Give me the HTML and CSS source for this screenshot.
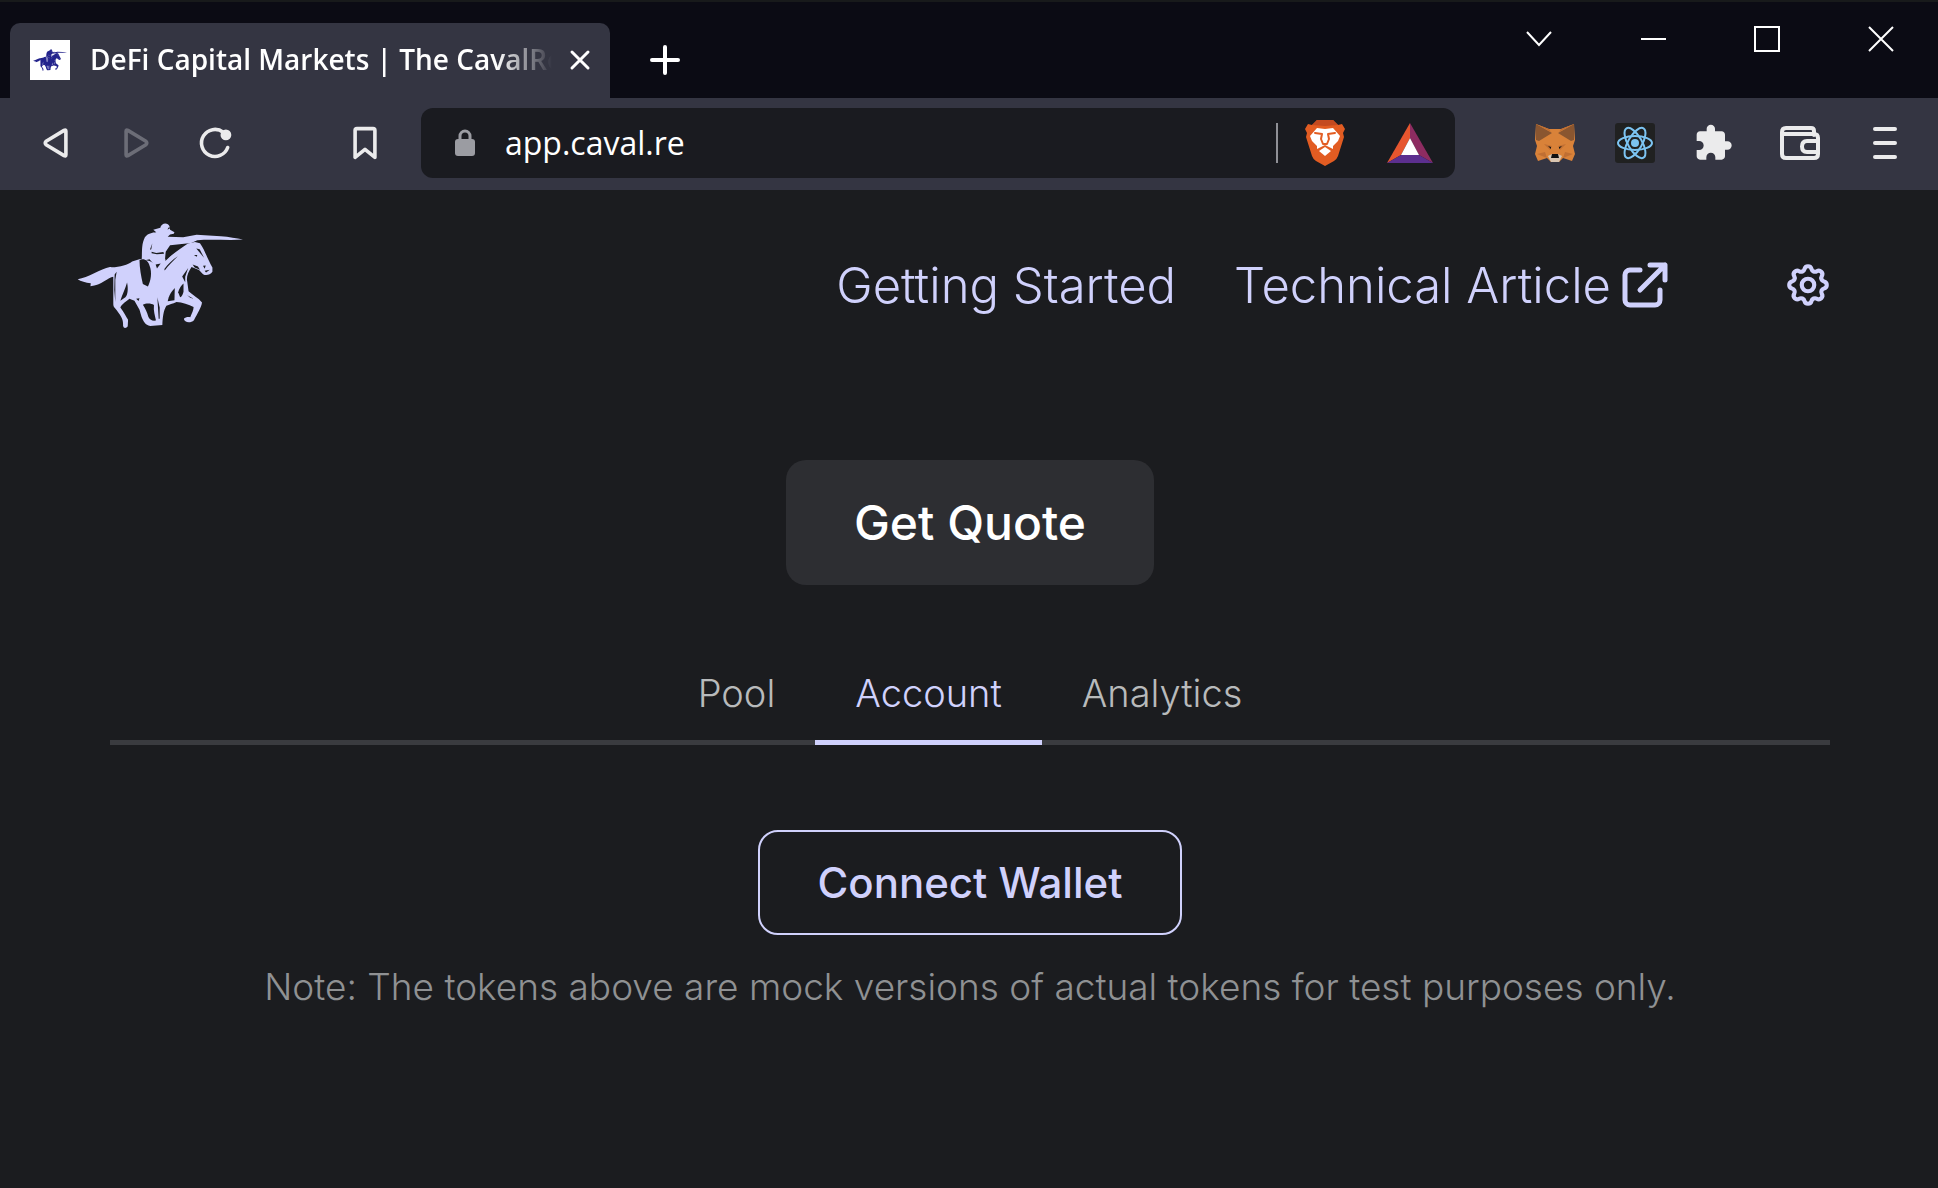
FILE: index.html
```html
<!DOCTYPE html>
<html lang="en">

<head>
    <meta charset="UTF-8">
    <meta name="viewport" content="width=device-width, initial-scale=1.0">
    <title>DeFi Capital Markets | The CavalRe</title>
    <link rel="stylesheet" href="styles.css">
</head>

<body>
    <svg width="0" height="0" class="defs" aria-hidden="true">
        <symbol id="horse" viewBox="52 68 494 318">
            <!-- horse -->
            <path d="M54 238 C85 234 122 208 150 202 C178 203 203 195 216 185 L240 178 L268 184 L290 196 L308 184 C335 166 358 148 382 132 L403 127 L418 131 C433 152 441 180 455 203 L455 216 C448 225 436 229 427 223 L415 211 L393 202 C382 218 377 233 380 245 L384 274 C397 286 413 294 424 307 C422 322 410 340 400 360 C390 370 371 367 370 356 C374 350 384 350 389 351 C394 340 399 329 399 321 C385 313 365 307 348 306 C337 311 326 314 318 317 C309 332 307 352 306 374 L270 377 C255 375 250 364 244 350 L238 329 L223 302 L208 296 C199 304 185 312 181 322 C192 337 198 348 204 359 L203 378 C198 386 188 384 189 374 C190 358 183 346 164 323 C161 320 160 316 160 310 L160 231 C145 232 125 257 92 259 L93 250 C78 248 63 244 54 238 Z"/>
            <!-- rider -->
            <path d="M244 184 C247 160 242 137 254 113 C263 101 276 99 288 98 L279 91 L300 85 C302 71 322 66 328 82 L329 91 L342 98 L340 103 L329 105 L322 112 L368 113 L408 106 L480 110 C505 112 526 116 546 120 C500 123 450 118 410 122 L392 130 L329 137 L316 156 L314 182 L309 205 L288 206 L276 188 L268 179 Z"/>
            <g class="cut">
                <path d="M238 181 C252 175 264 183 268 198 C276 217 272 243 263 260 L248 252 C243 230 238 205 238 181 Z"/>
                <path d="M248 314 C257 309 273 309 281 315 C279 332 284 347 287 361 C276 363 267 358 264 349 C261 337 255 325 248 314 Z"/>
                <path d="M291 292 L295 356 L298 356 L298 322 Z"/>
                <path d="M322 304 C325 286 333 275 343 264 L342 301 Z"/>
                <path d="M353 277 C356 266 363 256 369 251 L369 275 C367 284 363 290 359 292 Z"/>
                <path d="M181 302 C187 283 196 266 201 248 C205 268 203 285 196 292 Z"/>
                <path d="M164 224 L170 216 L166 240 L166 306 L163 270 Z"/>
                <path d="M312 208 C322 193 336 181 352 170 C338 184 324 198 313 212 Z"/>
                <path d="M365 230 L383 205 L374 231 L374 247 Z"/>
                <path d="M286 194 L301 191 L290 206 Z"/>
                <path d="M274 156 L288 160 L309 157 L311 162 L290 164 L274 161 Z"/>
                <path d="M269 150 L276 132 L273 149 Z"/>
                <path d="M407 147 L417 149 L430 174 Z"/>
                <path d="M400 166 L410 166 L408 171 Z"/>
                <path d="M396 194 L412 200 L418 210 L402 203 Z"/>
                <path d="M427 198 L435 197 L432 207 Z M432 213 L447 210 L436 218 Z"/>
                <path d="M380 286 L399 296 L389 293 Z"/>
                <path d="M340 109 L368 108 L374 112 Z M228 296 L238 295 L235 303 Z"/>
                <path d="M317 158 L352 148 L315 184 Z M327 81 L321 90 L328 88 Z"/>
            </g>
        </symbol>
    </svg>

    <div class="titlebar">
        <div class="tab">
            <span class="favicon"><svg><use href="#horse" /></svg></span>
            <span class="tab-title">DeFi Capital Markets | The CavalRe</span>
            <button class="tab-close" aria-label="Close tab">
                <svg width="24" height="24" viewBox="0 0 24 24"><path d="M4 4l16 16M20 4L4 20" /></svg>
            </button>
        </div>
        <button class="new-tab" aria-label="New tab">
            <svg width="32" height="32" viewBox="0 0 32 32"><path d="M16 3v26M3 16h26" /></svg>
        </button>
        <div class="window-btns">
            <button aria-label="Search tabs"><svg width="26" height="26" viewBox="0 0 26 26"><path d="M1 6l12 13L25 6" /></svg></button>
            <button aria-label="Minimize"><svg width="26" height="26" viewBox="0 0 26 26"><path d="M1 13h25" /></svg></button>
            <button aria-label="Maximize"><svg width="26" height="26" viewBox="0 0 26 26"><path d="M1 1h24v24H1z" /></svg></button>
            <button aria-label="Close"><svg width="26" height="26" viewBox="0 0 26 26"><path d="M1 1l24 24M25 1L1 25" /></svg></button>
        </div>
    </div>

    <div class="toolbar">
        <div class="history">
            <button class="tool" aria-label="Back"><svg viewBox="0 0 40 40"><path d="M29 6q2-1 2 1v26q0 2-2 1L9 22q-2-2 0-4z" /></svg></button>
            <button class="tool off" aria-label="Forward"><svg viewBox="0 0 40 40"><path d="M11 6q-2-1-2 1v26q0 2 2 1L31 22q2-2 0-4z" /></svg></button>
            <button class="tool" aria-label="Reload"><svg viewBox="0 0 40 40"><path d="M28 8A15 15 0 1 0 33 25" /><circle cx="31" cy="11" r="6" class="solid" /></svg></button>
        </div>
        <button class="tool bookmark" aria-label="Bookmark"><svg viewBox="0 0 40 40"><path d="M9 36V6q0-2 2-2h18q2 0 2 2v30l-11-9z" /></svg></button>

        <div class="address">
            <svg class="lock" width="20" height="28" viewBox="0 0 20 28"><path d="M5 11V7a5 5 0 0 1 10 0v4" fill="none" stroke="#9b9ca2" stroke-width="3" /><rect y="10" width="20" height="17" rx="3" fill="#9b9ca2" /></svg>
            <input type="text" value="app.caval.re" aria-label="Address">
            <span class="divider"></span>
            <button class="tool" aria-label="Brave Shields">
                <svg viewBox="0 0 40 46">
                    <path fill="#e25c22" d="M12 0h16l5 5 4-1 3 5-2 4 1 4-6 19q-1 3-4 5l-9 5-9-5q-3-2-4-5L1 17l1-4L0 9l3-5 4 1z" />
                    <path fill="#c44a20" d="M12 0h16l5 5-13 1L7 5z" />
                    <path fill="#fff" d="M12 8l8 1 8-1 7 8-2 5-5 5v3l-8-4-8 4v-3l-5-5-2-5z" />
                    <path fill="#fff" d="M14 31l6-4 6 4-6 5z" />
                    <path fill="none" stroke="#e25c22" stroke-width="2" d="M10 13l7 1-1 5 2 5h4l2-5-1-5 7-1" />
                </svg>
            </button>
            <button class="tool" aria-label="Brave Rewards">
                <svg viewBox="0 0 46 40">
                    <path fill="#e6562f" d="M23 0v15l-9 17-14 8z" />
                    <path fill="#8d2c61" d="M23 0v15l9 17 14 8z" />
                    <path fill="#5c2f8f" d="M14 32h18l14 8H0z" />
                    <path fill="#fff" d="M23 15l9 17H14z" />
                </svg>
            </button>
        </div>

        <div class="extensions">
            <button class="tool" aria-label="MetaMask">
                <svg viewBox="0 0 40 40">
                    <path fill="#d98239" d="M1 1l13 5h12l13-5 1 16-2 6 2 8-3 7-9-3-4 4h-8l-4-4-9 3-3-7 2-8-2-6z" />
                    <path fill="#8a5630" d="M1 1l16 9-13 8-3-1zM39 1l-16 9 13 8 3-1z" />
                    <path fill="#c06f33" d="M1 1l15 8-2-3zM39 1L24 9l2-3zM9 21l8 2-2 4zM31 21l-8 2 2 4zM2 31l8-2 2 6zM38 31l-8-2-2 6z" />
                    <path fill="#d8c5b1" d="M13 33l4-2h6l4 2-3 6h-8z" />
                    <path fill="#111" d="M17 31h6l1 4h-8zM13 23l3 1v2zM27 23l-3 1v2z" />
                </svg>
            </button>
            <button class="tool" aria-label="React Developer Tools">
                <svg viewBox="0 0 40 40">
                    <rect width="40" height="40" rx="3" fill="#202121" />
                    <g class="orbits">
                        <ellipse cx="20" cy="20" rx="17" ry="7" />
                        <ellipse cx="20" cy="20" rx="17" ry="7" transform="rotate(60 20 20)" />
                        <ellipse cx="20" cy="20" rx="17" ry="7" transform="rotate(120 20 20)" />
                    </g>
                    <circle cx="20" cy="20" r="4" fill="#7cc4f2" />
                </svg>
            </button>
            <button class="tool" aria-label="Extensions">
                <svg viewBox="1 0 24 24"><path class="solid" d="M20.5 11H19V7c0-1.100-.9-2-2-2h-4V3.500a2.500 2.500 0 0 0-5 0V5H4c-1.100 0-2 .9-2 2v3.800h1.500a2.700 2.700 0 0 1 0 5.400H2V20c0 1.100.9 2 2 2h3.800v-1.500a2.700 2.700 0 0 1 5.400 0V22H17c1.100 0 2-.9 2-2v-4h1.500a2.500 2.500 0 0 0 0-5z" /></svg>
            </button>
        </div>
        <div class="menus">
            <button class="tool" aria-label="Wallet"><svg viewBox="0 0 40 40"><path d="M34 12V8q0-3-3-3H6Q2 5 2 9v22q0 4 4 4h28q4 0 4-4V15q0-4-4-4H4M38 18H27q-5 0-5 5.500T27 29h11" /></svg></button>
            <button class="tool" aria-label="Menu"><svg viewBox="0 0 40 40"><path d="M10 6h20M10 20h20M10 34h20" /></svg></button>
        </div>
    </div>

    <header>
        <a href="#" class="logo" aria-label="CavalRe"><svg><use href="#horse" /></svg></a>
        <nav>
            <a href="#">Getting Started</a>
            <a href="#">Technical Article<svg class="line-icon" width="60" height="60" viewBox="0 0 24 24"><path d="M10 6H6a2 2 0 0 0-2 2v10a2 2 0 0 0 2 2h10a2 2 0 0 0 2-2v-4M14 4h6m0 0v6m0-6L10 14" /></svg></a>
        </nav>
        <button class="settings" aria-label="Settings">
            <svg class="line-icon" width="50" height="50" viewBox="0 0 24 24">
                <path d="M10.325 4.317c.426-1.756 2.924-1.756 3.350 0a1.724 1.724 0 0 0 2.573 1.066c1.543-.94 3.310.826 2.370 2.370a1.724 1.724 0 0 0 1.065 2.572c1.756.426 1.756 2.924 0 3.350a1.724 1.724 0 0 0-1.066 2.573c.94 1.543-.826 3.310-2.370 2.370a1.724 1.724 0 0 0-2.572 1.065c-.426 1.756-2.924 1.756-3.350 0a1.724 1.724 0 0 0-2.573-1.066c-1.543.94-3.310-.826-2.370-2.370a1.724 1.724 0 0 0-1.065-2.572c-1.756-.426-1.756-2.924 0-3.350a1.724 1.724 0 0 0 1.066-2.573c-.94-1.543.826-3.310 2.370-2.370.996.608 2.296.07 2.572-1.065z" />
                <circle cx="12" cy="12" r="3" />
            </svg>
        </button>
    </header>

    <main>
        <button class="btn quote">Get Quote</button>
        <div class="tabs" role="tablist">
            <button role="tab">Pool</button>
            <button role="tab" class="active" aria-selected="true">Account</button>
            <button role="tab">Analytics</button>
        </div>
        <button class="btn connect">Connect Wallet</button>
        <p class="note">Note: The tokens above are mock versions of actual tokens for test purposes only.</p>
    </main>
</body>

</html>
```
FILE: styles.css
```css
* {
    box-sizing: border-box;
}

body {
    margin: 0;
    min-height: 100vh;
    background-color: #1b1c1f;
    color: #d0d1fc;
    font-family: Inter, "Liberation Sans", sans-serif;
}

button {
    display: flex;
    justify-content: center;
    align-items: center;
    border: none;
    padding: 0;
    background: none;
    color: inherit;
    font-family: inherit;
    cursor: pointer;
}

a {
    color: inherit;
    text-decoration: none;
}

.defs {
    position: absolute;
}

/* browser window */
.titlebar {
    display: flex;
    align-items: flex-end;
    height: 98px;
    padding-left: 10px;
    border-top: 2px solid #181a1b;
    background-color: #0b0b14;
}

.tab {
    display: flex;
    align-items: center;
    width: 600px;
    height: 75px;
    padding: 0 18px 2px 20px;
    border-radius: 10px 10px 0 0;
    background-color: #343542;
}

.favicon {
    --cut: #8080c0;
    display: flex;
    justify-content: center;
    align-items: center;
    width: 40px;
    height: 40px;
    background-color: #fff;
}

.favicon svg {
    width: 34px;
    height: 24px;
    fill: #23238c;
}

.tab-title {
    flex: 1;
    margin-left: 20px;
    padding-bottom: 2px;
    overflow: hidden;
    white-space: nowrap;
    color: #fff;
    font: 600 28px/38px "Open Sans", sans-serif;
    -webkit-mask-image: linear-gradient(to right, #000 88%, transparent);
    mask-image: linear-gradient(to right, #000 88%, transparent);
}

.tab-close {
    margin-left: 16px;
}

.tab-close svg,
.new-tab svg {
    fill: none;
    stroke: #fff;
    stroke-width: 3;
    stroke-linecap: round;
}

.new-tab {
    height: 75px;
    margin-left: 39px;
    padding-bottom: 2px;
}

.new-tab svg {
    stroke-width: 4;
}

.window-btns {
    display: flex;
    align-self: flex-start;
    margin-left: auto;
}

.window-btns button {
    width: 114px;
    height: 74px;
}

.window-btns svg {
    fill: none;
    stroke: #fff;
    stroke-width: 2;
}

.toolbar {
    display: flex;
    align-items: center;
    height: 92px;
    padding: 0 33px 2px 36px;
    background-color: #343542;
}

.tool {
    width: 40px;
    height: 48px;
}

.tool svg {
    flex: none;
    width: 40px;
    height: 40px;
    fill: none;
    stroke: #ebebec;
    stroke-width: 4;
    stroke-linecap: round;
    stroke-linejoin: round;
}

.history svg,
.bookmark svg {
    width: 36px;
    height: 36px;
}

.tool .solid {
    fill: #ebebec;
    stroke: none;
}

.off svg {
    stroke: #6c6d77;
}

.history,
.extensions {
    display: flex;
    gap: 40px;
}

.bookmark {
    margin: 0 36px 0 109px;
}

.address {
    flex: 1;
    display: flex;
    align-items: center;
    height: 70px;
    margin-right: 80px;
    padding: 0 25px 0 34px;
    border-radius: 12px;
    background-color: #1a1b20;
}

.address input {
    flex: 1;
    min-width: 0;
    padding: 0 0 0 30px;
    border: none;
    outline: none;
    background: none;
    color: #fff;
    font: 32px/44px "Open Sans", sans-serif;
}

.divider {
    width: 2px;
    height: 40px;
    margin-right: 27px;
    background-color: #8f9096;
}

.address .tool svg {
    width: 46px;
    height: 46px;
    stroke: none;
}

.address .tool + .tool {
    margin-left: 45px;
}

.extensions .tool svg {
    stroke: none;
}

.extensions .orbits {
    stroke: #7cc4f2;
    stroke-width: 2;
}

.menus {
    display: flex;
    gap: 45px;
    margin-left: 45px;
}

/* app */
header {
    display: flex;
    align-items: center;
    height: 190px;
    padding: 0 105px 0 77px;
}

.logo {
    --cut: #1b1c1f;
}

.logo svg {
    display: block;
    width: 166px;
    height: 107px;
    margin-bottom: 20px;
    fill: #d0d1fc;
}

.cut {
    fill: var(--cut);
}

nav {
    display: flex;
    align-items: center;
    gap: 58px;
    margin-left: auto;
    font-size: 49px;
    font-weight: 300;
}

nav a {
    display: flex;
    align-items: center;
    gap: 4px;
}

.line-icon {
    fill: none;
    stroke: currentColor;
    stroke-width: 2;
    stroke-linecap: round;
    stroke-linejoin: round;
}

.settings {
    margin-left: 108px;
}

main {
    display: flex;
    flex-direction: column;
    align-items: center;
    padding: 80px 108px 0 110px;
}

.btn {
    border-radius: 20px;
    font-weight: 500;
}

.quote {
    height: 125px;
    padding: 0 68px;
    background-color: #2d2e32;
    color: #fff;
    font-size: 48px;
}

.tabs {
    display: flex;
    justify-content: center;
    align-self: stretch;
    height: 105px;
    margin-top: 55px;
    border-bottom: 5px solid #3a3b3f;
}

.tabs button {
    height: 105px;
    padding: 6px 40px 0;
    border-bottom: 5px solid transparent;
    color: #b8babb;
    font-size: 38px;
    font-weight: 300;
}

.tabs .active {
    border-color: #d0d1fc;
    color: #d0d1fc;
}

.connect {
    height: 105px;
    margin-top: 85px;
    padding: 0 58px;
    border: 2px solid #d0d1fc;
    font-size: 42px;
}

.note {
    margin: 28px 0 0;
    color: #8f9193;
    font-size: 37px;
    font-weight: 300;
    line-height: 48px;
}
```
